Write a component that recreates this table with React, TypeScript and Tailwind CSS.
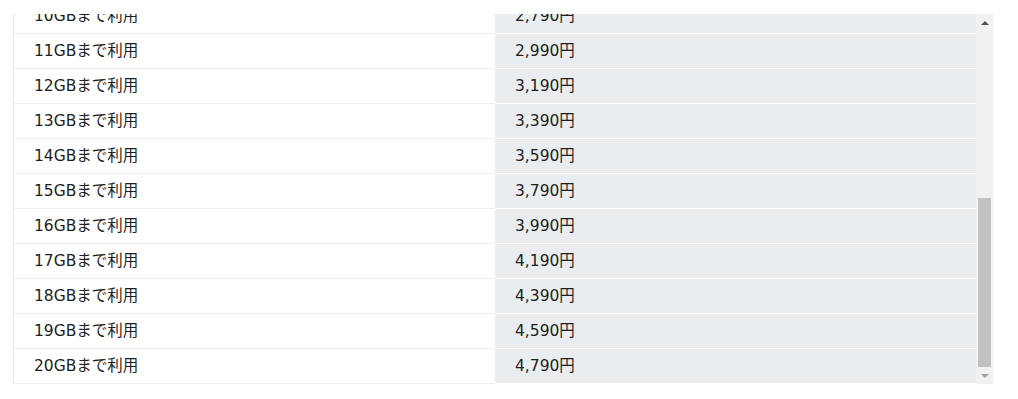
import { useMemo } from 'react'

const font = { fontFamily: '"DejaVu Sans", "Noto Sans CJK JP", sans-serif' }

export default function App() {
  // 10GB〜20GB, +200円 per GB (list is scrolled to the bottom)
  const rows = useMemo(
    () =>
      Array.from({ length: 11 }, (_, i) => ({
        label: `${i + 10}GBまで利用`,
        price: `${(2790 + i * 200).toLocaleString('en-US')}円`,
      })),
    []
  )

  return (
    <div className="min-h-screen bg-white pt-[14px] pl-[13px]">
      <div className="flex w-[980px] h-[370px]">
        {/* Table (scrolled to bottom) */}
        <div className="flex-1 flex flex-col justify-end overflow-hidden border-l border-[#e6e6e6]">
          {rows.map((r) => (
            <div key={r.label} className="flex h-[35px] shrink-0 text-[15.5px] text-[#1e1e1e]" style={font}>
              <div className="w-1/2 flex items-center pl-5 pt-[2px] bg-white border-b border-[#eeeeee]">{r.label}</div>
              <div className="w-1/2 flex items-center pl-5 pt-[2px] bg-[#e9edf0] border-b border-white">{r.price}</div>
            </div>
          ))}
        </div>

        {/* Scrollbar */}
        <div className="w-[17px] flex flex-col bg-[#f1f1f1]">
          <div className="h-[17px] flex items-center justify-center">
            <div className="w-0 h-0 border-l-[4px] border-r-[4px] border-b-[4px] border-l-transparent border-r-transparent border-b-[#505050]" />
          </div>
          <div className="flex-1 flex flex-col">
            <div className="flex-1" />
            <div className="h-[169px] w-[13px] mx-auto bg-[#c1c1c1]" />
          </div>
          <div className="h-[17px] flex items-center justify-center">
            <div className="w-0 h-0 border-l-[4px] border-r-[4px] border-t-[4px] border-l-transparent border-r-transparent border-t-[#a3a3a3]" />
          </div>
        </div>
      </div>
    </div>
  )
}
